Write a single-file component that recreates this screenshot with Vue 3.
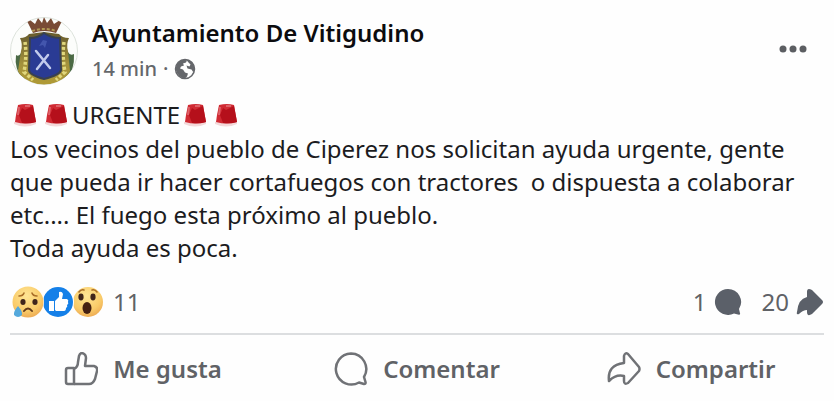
<template>
  <article class="post">
    <header class="head">
      <svg class="avatar" viewBox="0 0 68 68" aria-hidden="true">
        <defs>
          <clipPath id="round"><circle cx="34" cy="34" r="33.5" /></clipPath>
          <linearGradient id="gold" x1="0" y1="0" x2="0" y2="1">
            <stop offset="0" stop-color="#665a2c" />
            <stop offset=".6" stop-color="#a3923c" />
            <stop offset="1" stop-color="#b09a35" />
          </linearGradient>
        </defs>
        <circle cx="34" cy="34" r="33.5" fill="#fcfdfb" stroke="#dde3dc" />
        <g clip-path="url(#round)">
          <path d="M6 38q3 2 5-2l6 24-4 4Q4 51 6 38zM64 37q-4 2-6-2l-6 24 3 5q10-10 9-27z" fill="#4b6a45" />
          <path d="M10 21q6 0 9-4l15-2 15 2q3 4 10 4-3 6-1 13l2 20q-5 12-26 14Q14 67 8 54l3-20q2-7-1-13z" fill="url(#gold)" />
          <path d="M15 25q2 14-1 30l9 8M54 25q-2 14 1 30l-9 8" fill="none" stroke="#e0d77c" stroke-width="3.500" stroke-dasharray="3 2" />
          <path d="M34 16q7 5 16 5l1 32q-1 5-17 9-15-4-15-9l1-32q8 0 14-5z" fill="#2a3b94" stroke="#39414f" stroke-width="2" />
          <path d="M26 34l14 17M38 38L27 52" fill="none" stroke="#c2cbec" stroke-width="2.500" stroke-linecap="round" />
          <path d="M33 23l-4 6 4-1 2 3 2-7z" fill="#4356ad" />
          <path d="M23 16L17 4l3-1 5 4 3-6 4 5 2-6 3 6 4-5 3 6 6-4 2 1-6 12q-12-4-23 0z" fill="#794b35" />
          <path d="M22 14q12-4 24 0" fill="none" stroke="#b29a54" stroke-width="2" stroke-dasharray="3 2" />
        </g>
      </svg>
      <div class="who">
        <h1><a href="#">Ayuntamiento De Vitigudino</a></h1>
        <div class="meta">
          <a href="#">14 min</a>
          <span class="dot">·</span>
          <svg class="globe" viewBox="0 0 22 22" role="img" aria-label="Público">
            <circle cx="11" cy="11" r="9.500" fill="#fff" stroke="#65676b" stroke-width="1.500" />
            <path d="M1.500 11Q2 3 10 1.500l3 1-1 2-3 1 1 2-3 1-1 2 3 1 2 3 3 1-1 3-2 2Q4 20 1.500 11z" fill="#65676b" />
            <path d="M12 1.500q8 1 8.500 9l-1 4-2-3-4-1-1-3 3 1 1-2-2-2z" fill="#65676b" />
          </svg>
        </div>
      </div>
      <button class="more" type="button" aria-label="Más opciones">
        <svg viewBox="0 0 28 8" aria-hidden="true">
          <circle v-for="x in [4, 14, 24]" :key="x" :cx="x" cy="4" r="3.5" fill="#5c5e62" />
        </svg>
      </button>
    </header>

    <div class="body">
      <p class="alert">
        <template v-for="(part, i) in alert" :key="i">
          <span v-if="part">{{ part }}</span>
          <svg v-else class="siren" viewBox="0 0 31 26" aria-hidden="true">
            <path d="M4 20h22v2q-11 5-22 0z" fill="#f3d9da" />
            <path d="M8 3q8-2 15 0l3 17q-10 3-21 0l1-7z" fill="#d02a33" />
            <path d="M12 6l3 2 8-4 3 16q-6 2-14 1l-3-8z" fill="#b5101b" />
            <path d="M9 5L8 13M15 4h5" stroke="#dd6168" stroke-width="2" />
          </svg>
        </template>
      </p>
      <p v-for="line in lines" :key="line">{{ line }}</p>
    </div>

    <div class="stats">
      <button class="reactions" type="button" aria-label="11 reacciones">
        <svg viewBox="0 0 94 34" aria-hidden="true">
          <defs>
            <radialGradient id="face" cx=".45" cy=".3" r=".75">
              <stop offset="0" stop-color="#ffe594" />
              <stop offset=".65" stop-color="#f9cb69" />
              <stop offset="1" stop-color="#eca650" />
            </radialGradient>
          </defs>
          <circle cx="78" cy="17" r="15" fill="url(#face)" />
          <path d="M69 7q2-3 5-2M82 5q3-1 5 2" fill="none" stroke="#a96e28" stroke-width="1.6" stroke-linecap="round" />
          <ellipse cx="71" cy="12" rx="2.6" ry="3.4" fill="#40251b" />
          <ellipse cx="83" cy="12" rx="2.6" ry="3.4" fill="#40251b" />
          <ellipse cx="77" cy="23" rx="4.5" ry="6" fill="#452011" />
          <circle cx="48" cy="17" r="16" fill="#fff" />
          <circle cx="48" cy="17" r="15" fill="#1580e8" />
          <path d="M39 16h5v10h-5zM45 16l4-4V7q3-1 4 2l-1 5h5q2 1 1 3 1 2-1 3 1 2-1 3 0 3-2 3h-8l-1-1z" fill="#fff" />
          <circle cx="18" cy="17" r="16" fill="#fff" />
          <circle cx="18" cy="17" r="15.5" fill="url(#face)" />
          <path d="M9 11q4 0 5-3M22 8q1 3 5 3" fill="none" stroke="#a96e28" stroke-width="1.6" stroke-linecap="round" />
          <ellipse cx="13" cy="17" rx="2.6" ry="3" fill="#40251b" />
          <ellipse cx="25" cy="17" rx="2.6" ry="3" fill="#40251b" />
          <path d="M14 26q4-5 8 0" fill="none" stroke="#613819" stroke-width="2" stroke-linecap="round" />
          <path d="M8 21q-5 6-4 9 4 4 8 0 1-3-4-9z" fill="#55a9dc" />
        </svg>
        <span>11</span>
      </button>
      <div class="counts">
        <button type="button" aria-label="1 comentario">
          <span>1</span>
          <svg viewBox="0 0 28 28" aria-hidden="true">
            <path d="M14 1a13 13 0 1 0 6 24.500l5 1.200q1.500 0 1-1.500l-1-4.200A13 13 0 0 0 14 1z" fill="#5b6069" />
          </svg>
        </button>
        <button type="button" aria-label="20 veces compartido">
          <span>20</span>
          <svg viewBox="0 0 28 28" aria-hidden="true">
            <path d="M11 4q0-5 5-2l10 10q2 2 0 4L16 26q-5 3-5-2v-2q-4 0-8 4-3 1-2-2Q2 11 11 9z" fill="#5b6069" />
          </svg>
        </button>
      </div>
    </div>

    <footer class="actions">
      <button v-for="action in actions" :key="action.label" type="button">
        <svg viewBox="0 0 34 34" aria-hidden="true">
          <path v-for="d in action.paths" :key="d" :d="d" />
        </svg>
        <span>{{ action.label }}</span>
      </button>
    </footer>
  </article>
</template>

<script setup>
// an empty entry is a siren
const alert = ['', '', 'URGENTE', '', '']

const lines = [
  'Los vecinos del pueblo de Ciperez nos solicitan ayuda urgente, gente',
  'que pueda ir hacer cortafuegos con tractores  o dispuesta a colaborar',
  'etc.... El fuego esta próximo al pueblo.',
  'Toda ayuda es poca.',
]

const actions = [
  {
    label: 'Me gusta',
    paths: [
      'M4 16h6v16H4q-2 0-2-2V18q0-2 2-2z',
      'M10 17q4-2 4-7l1-6q1-3 3-3 4 1 4 5l-1 8h9q4 1 3 5l-2 8q-2 5-6 5H10',
    ],
  },
  {
    label: 'Comentar',
    paths: ['M17 1.500a15.500 15.500 0 1 0 8 29l5 1.500q2 0 1.500-2l-1.500-5A15.500 15.500 0 0 0 17 1.500z'],
  },
  {
    label: 'Compartir',
    paths: ['M17 4q1-4 4-2l11 13q1 2 0 4L21 31q-4 2-4-2v-5Q9 22 2 29 0 13 17 11z'],
  },
]
</script>

<style>
body {
  margin: 0;
  background: #fefefe;
}
</style>

<style scoped>
.post {
  padding: 15px 10px 8px;
  font-family: 'Noto Sans', 'Open Sans', sans-serif;
  font-size: 24px;
  color: #1c1c1e;
}

a {
  color: inherit;
  text-decoration: none;
}

button {
  display: flex;
  align-items: center;
  padding: 0;
  border: 0;
  background: none;
  color: #606266;
  font: inherit;
  cursor: pointer;
}

.head {
  display: flex;
  align-items: center;
  gap: 14px;
}

.avatar {
  width: 68px;
  height: 72px;
}

.who {
  flex: 1;
}

h1 {
  margin: 0;
  font-size: 24px;
  font-weight: 600;
  line-height: 36px;
  color: #0c0c0e;
}

.meta {
  display: flex;
  align-items: center;
  gap: 6px;
  font-size: 20px;
  font-weight: 500;
  line-height: 36px;
  color: #65676b;
}

.globe {
  width: 22px;
  height: 22px;
}

.more {
  padding: 8px 17px 12px;
}

.more svg {
  width: 28px;
  height: 8px;
}

.body {
  padding-top: 11px;
}

p {
  margin: 0;
  line-height: 33px;
  white-space: pre-wrap;
}

.alert {
  display: flex;
  align-items: center;
  line-height: 34px;
}

.siren {
  width: 31px;
  height: 26px;
}

.stats {
  display: flex;
  justify-content: space-between;
  padding: 20px 0 13px;
  border-bottom: 2px solid #dcdee0;
  line-height: 36px;
}

.reactions {
  gap: 9px;
}

.reactions svg {
  width: 94px;
  height: 34px;
}

.counts {
  display: flex;
  gap: 20px;
}

.counts button {
  gap: 7px;
}

.counts svg {
  width: 28px;
  height: 28px;
}

.actions {
  display: grid;
  grid-template-columns: repeat(3, 1fr);
  margin: 0 -4px;
  padding-top: 16px;
}

.actions button {
  justify-content: center;
  gap: 15px;
  font-weight: 600;
  line-height: 36px;
}

.actions svg {
  width: 34px;
  height: 34px;
  fill: none;
  stroke: #707276;
  stroke-width: 2.5;
  stroke-linejoin: round;
}
</style>
